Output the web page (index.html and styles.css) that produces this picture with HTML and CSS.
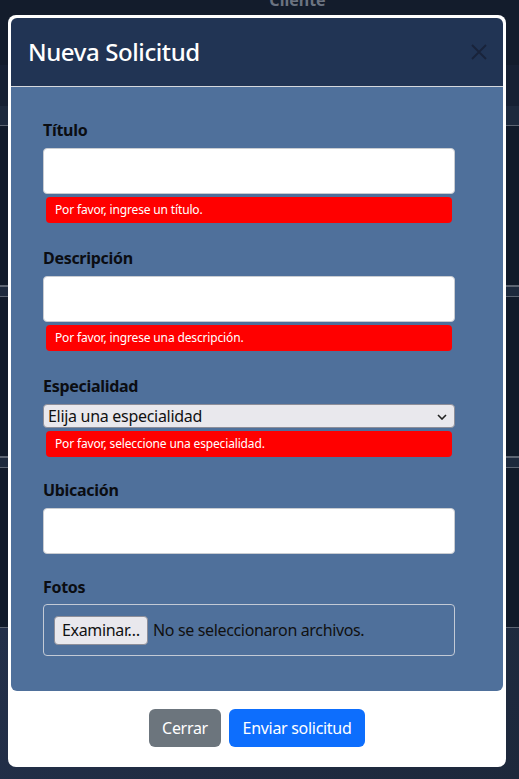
FILE: index.html
```html
<!DOCTYPE html>
<html lang="es">
<head>
<meta charset="utf-8">
<title>Nueva Solicitud</title>
<link rel="stylesheet" href="styles.css">
</head>
<body>
<div class="page">
  <div class="page-top"><span class="page-title">Cliente</span></div>
  <div class="page-strip"></div>
  <div class="row band"></div>
  <div class="row tall"></div>
  <div class="row band"></div>
  <div class="row tall"></div>
  <div class="row band"></div>
  <div class="row tall"></div>
  <div class="row rest"></div>
</div>

<div class="overlay">
  <div class="modal">
    <div class="modal-header">
      <h5 class="modal-title">Nueva Solicitud</h5>
      <button class="btn-close" type="button" aria-label="Cerrar">
        <svg width="16" height="16" viewBox="0 0 16 16"><path d="M1 1L15 15M15 1L1 15" stroke="currentColor" stroke-width="1.8" fill="none"/></svg>
      </button>
    </div>
    <div class="modal-body">
      <div class="group g-wide">
        <label class="form-label">Título</label>
        <input class="form-control" type="text">
        <div class="error">Por favor, ingrese un título.</div>
      </div>
      <div class="group g-wide">
        <label class="form-label">Descripción</label>
        <input class="form-control" type="text">
        <div class="error">Por favor, ingrese una descripción.</div>
      </div>
      <div class="group">
        <label class="form-label">Especialidad</label>
        <div class="select-wrap">
          <select class="form-select"><option>Elija una especialidad</option></select>
          <svg class="chev" width="10" height="6" viewBox="0 0 10 6"><path d="M1 1L5 5L9 1" stroke="#222" stroke-width="1.6" fill="none"/></svg>
        </div>
        <div class="error">Por favor, seleccione una especialidad.</div>
      </div>
      <div class="group">
        <label class="form-label">Ubicación</label>
        <input class="form-control" type="text">
      </div>
      <div class="group g-last">
        <label class="form-label label-tight">Fotos</label>
        <div class="file-box">
          <span class="file-btn">Examinar…</span>
          <span class="file-text">No se seleccionaron archivos.</span>
        </div>
      </div>
    </div>
    <div class="modal-footer">
      <button class="btn btn-secondary" type="button">Cerrar</button>
      <button class="btn btn-primary" type="button">Enviar solicitud</button>
    </div>
  </div>
</div>
</body>
</html>
```

FILE: styles.css
```css
* { box-sizing: border-box; }
html, body { margin: 0; padding: 0; }
body {
  width: 519px;
  height: 779px;
  overflow: hidden;
  position: relative;
  background: #111a2a;
  font-family: "Noto Sans", "DejaVu Sans", sans-serif;
}
.page { width: 100%; height: 100%; display: flex; flex-direction: column; }
.page-top {
  height: 65px;
  background: #131c2c;
  display: flex;
  justify-content: center;
  padding-left: 76px;
}
.page-title {
  color: #6b7381;
  font-weight: 700;
  font-size: 16px;
  line-height: 16px;
  margin-top: -8px;
}
.page-strip { height: 41px; background: #162033; }
.row { border-bottom: 1px solid #5d6573; }
.band { height: 20px; background: #1d293d; }
.tall { height: 160px; background: #111a2a; }
.row.band:nth-of-type(5), .row.band:nth-of-type(7) { height: 11px; border-top: 1px solid #5d6573; }
.rest { flex: 1; background: linear-gradient(135deg, #23304a, #1d283b); border-bottom: 0; }

.overlay { position: absolute; inset: 0; }
.modal {
  margin: 15px 13px 0 8px;
  background: #fff;
  border-radius: 8px;
  padding: 3px;
}
.modal-header {
  background: #213454;
  border-radius: 6px 6px 0 0;
  height: 69px;
  border-bottom: 1px solid #d6d9de;
  display: flex;
  align-items: center;
  justify-content: space-between;
  padding: 0 16px 1px 17px;
}
.modal-title {
  margin: 0;
  color: #fff;
  font-size: 24px;
  font-weight: 500;
  line-height: 36px;
  letter-spacing: -0.4px;
}
.btn-close {
  background: none;
  border: 0;
  padding: 0;
  width: 16px;
  height: 16px;
  color: #19233a;
  display: flex;
}
.modal-body {
  background: #4f709b;
  border-radius: 0 0 6px 6px;
  padding: 31px 48px 35px 32px;
}
.group { display: flex; flex-direction: column; margin-bottom: 21px; }
.group.g-wide { margin-bottom: 23px; }
.group.g-last { margin-bottom: 0; }
.form-label {
  font-size: 16px;
  font-weight: 700;
  line-height: 24px;
  color: #0b0d12;
  margin-bottom: 6px;
  letter-spacing: -0.3px;
}
.form-label.label-tight { margin-bottom: 5px; }
.form-control {
  height: 46px;
  width: 100%;
  border: 1px solid #c9ccd1;
  border-radius: 4px;
  background: #fff;
  font: inherit;
  margin: 0;
}
.error {
  margin: 3px 3px 0 3px;
  height: 26px;
  background: #ff0000;
  border-radius: 4px;
  color: #fff;
  font-size: 12px;
  line-height: 26px;
  padding-left: 9px;
  letter-spacing: -0.15px;
}
.select-wrap { position: relative; }
.form-select {
  appearance: none;
  -webkit-appearance: none;
  width: 100%;
  height: 24px;
  margin: 0;
  border: 1px solid #8d8e99;
  border-radius: 4px;
  background: #e9e8ed;
  font-family: inherit;
  font-size: 16px;
  color: #111;
  padding: 0 0 0 4px;
  line-height: 22px;
  letter-spacing: -0.3px;
}
.chev { position: absolute; right: 8px; top: 10px; }
.file-box {
  height: 52px;
  border: 1px solid #c3cad6;
  border-radius: 4px;
  display: flex;
  align-items: center;
  padding-left: 10px;
  gap: 5px;
  letter-spacing: -0.35px;
}
.file-btn {
  height: 29px;
  width: 94px;
  text-align: center;
  border: 1px solid #8d8e99;
  border-radius: 4px;
  background: #e9e8ed;
  color: #111;
  font-size: 16px;
  line-height: 27px;
}
.file-text { color: #111; font-size: 16px; }
.modal-footer {
  display: flex;
  justify-content: center;
  gap: 8px;
  padding: 18px 0 17px;
}
.btn {
  height: 38px;
  border: 0;
  border-radius: 6px;
  color: #fff;
  font-family: inherit;
  font-size: 16px;
  padding: 0;
  white-space: nowrap;
  text-align: center;
  letter-spacing: -0.3px;
}
.btn-secondary { background: #6c757d; width: 72px; }
.btn-primary { background: #0d6efd; width: 136px; }
```
